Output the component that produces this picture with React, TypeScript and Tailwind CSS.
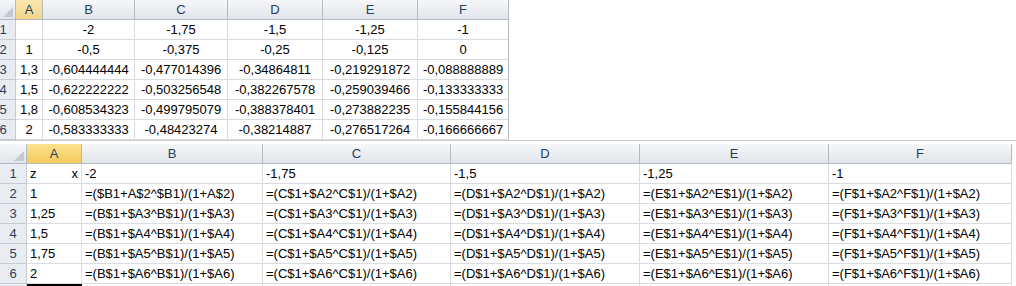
import React from 'react';

const font = { fontFamily: '"Liberation Sans", Arial, sans-serif' };

const topRows = [
  ['1', '', '-2', '-1,75', '-1,5', '-1,25', '-1'],
  ['2', '1', '-0,5', '-0,375', '-0,25', '-0,125', '0'],
  ['3', '1,3', '-0,604444444', '-0,477014396', '-0,34864811', '-0,219291872', '-0,088888889'],
  ['4', '1,5', '-0,622222222', '-0,503256548', '-0,382267578', '-0,259039466', '-0,133333333'],
  ['5', '1,8', '-0,608534323', '-0,499795079', '-0,388378401', '-0,273882235', '-0,155844156'],
  ['6', '2', '-0,583333333', '-0,48423274', '-0,38214887', '-0,276517264', '-0,166666667'],
];

const letters = ['A', 'B', 'C', 'D', 'E', 'F'];
const bottomA = ['z', '1', '1,25', '1,5', '1,75', '2'];
const bottomX = ['-2', '-1,75', '-1,5', '-1,25', '-1'];

const formula = (col: string, row: number) => {
  if (row === 2 && col === 'B') return '=($B1+A$2^$B1)/(1+A$2)';
  return `=(${col}$1+$A${row}^${col}$1)/(1+$A${row})`;
};

const Corner = () => (
  <div className="relative bg-gradient-to-b from-[#f6f7f9] to-[#e1e5ea] border-r border-b border-[#b4bac2]">
    <svg className="absolute right-[2px] bottom-[2px]" width="10" height="10" viewBox="0 0 10 10">
      <polygon points="10,0 10,10 0,10" fill="#c3c9d1" />
    </svg>
  </div>
);

const ColHeader = ({ label, selected, pale }: { label: string; selected?: boolean; pale?: boolean }) => (
  <div
    className={`flex items-center justify-center border-r border-b border-[#b4bac2] text-[13px] text-[#26405e] ${
      selected
        ? pale
          ? 'bg-gradient-to-b from-[#fbe8b0] to-[#f3d58a]'
          : 'bg-gradient-to-b from-[#fde28c] to-[#f5c95c]'
        : 'bg-gradient-to-b from-[#f6f7f9] to-[#e1e5ea]'
    }`}
  >
    {label}
  </div>
);

const TopSheet = () => (
  <div className="grid grid-cols-[16px_27px_92px_93px_95px_95px_91px] grid-rows-[20px_20px_20px_20px_20px_20px_20px] w-[510px]">
    <Corner />
    {letters.map((l) => (
      <ColHeader key={l} label={l} selected={l === 'A'} pale />
    ))}
    {topRows.map((row) => (
      <React.Fragment key={row[0]}>
        <div className="overflow-hidden bg-[#e9edf2] border-r border-b border-[#c5cbd3] text-[13px] text-[#26405e]">
          <div className="w-[26px] -ml-[10px] h-full flex items-center justify-center">{row[0]}</div>
        </div>
        {row.slice(1).map((v, i) => (
          <div
            key={i}
            className={`flex items-center justify-center border-b border-r text-[13px] text-black ${
              i === 5 ? 'border-r-[#b4bac2]' : 'border-r-[#dadcdf]'
            } border-b-[#dadcdf]`}
          >
            {v}
          </div>
        ))}
      </React.Fragment>
    ))}
  </div>
);

const BottomSheet = () => (
  <div className="grid grid-cols-[27px_55px_181px_188px_189px_189px_183px] grid-rows-[20px_20px_20px_20px_20px_20px_20px_2px] w-[1012px] border-r border-dotted border-[#b4bac2]">
    <Corner />
    {letters.map((l) => (
      <ColHeader key={l} label={l} selected={l === 'A'} />
    ))}
    {bottomA.map((a, r) => {
      const rowNum = r + 1;
      return (
        <React.Fragment key={rowNum}>
          <div className="flex items-center justify-center bg-[#e9edf2] border-r border-b border-[#c5cbd3] text-[13px] text-[#26405e]">
            {rowNum}
          </div>
          <div
            className={`flex items-center px-[3px] border-r border-b border-[#dadcdf] text-[13px] text-black ${
              rowNum === 1 ? 'justify-between' : ''
            }`}
          >
            <span>{a}</span>
            {rowNum === 1 && <span>x</span>}
          </div>
          {letters.slice(1).map((c, i) => (
            <div
              key={c}
              className="flex items-center px-[3px] border-r border-b border-[#dadcdf] text-[13px] text-black whitespace-nowrap overflow-hidden"
            >
              {rowNum === 1 ? bottomX[i] : formula(c, rowNum)}
            </div>
          ))}
        </React.Fragment>
      );
    })}
    <div className="bg-[#e9edf2] border-r border-[#c5cbd3]" />
    <div className="bg-black" />
    {letters.slice(1).map((c) => (
      <div key={c} className="border-r border-[#dadcdf]" />
    ))}
  </div>
);

export default function App() {
  return (
    <div className="w-[1016px] h-[286px] overflow-hidden bg-white" style={font}>
      <div className="h-[140px]">
        <TopSheet />
      </div>
      <div className="h-[4px] border-t border-[#c7ccd3] bg-white" />
      <BottomSheet />
    </div>
  );
}
